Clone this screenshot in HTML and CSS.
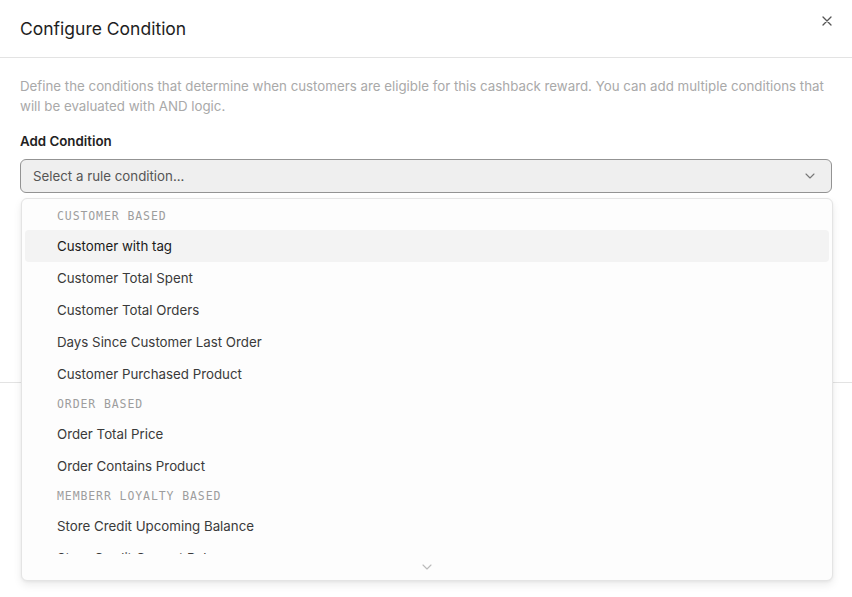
FILE: index.html
```html
<!DOCTYPE html>
<html lang="en">
<head>
<meta charset="utf-8">
<title>Configure Condition</title>
<link rel="stylesheet" href="styles.css">
</head>
<body>
<div class="dialog">
  <header class="dialog-header">
    <h2 class="dialog-title">Configure Condition</h2>
    <button class="close-btn" aria-label="Close">
      <svg width="12" height="12" viewBox="0 0 12 12"><path d="M2 2 L10 10 M10 2 L2 10" stroke="#555" stroke-width="1.3" fill="none" stroke-linecap="round"/></svg>
    </button>
  </header>
  <section class="dialog-body">
    <p class="description">Define the conditions that determine when customers are eligible for this cashback reward. You can add multiple conditions that will be evaluated with AND logic.</p>
    <label class="field-label">Add Condition</label>
    <div class="select-trigger">
      <span class="placeholder">Select a rule condition...</span>
      <svg class="chevron" width="10" height="6" viewBox="0 0 10 6"><path d="M1 1 L5 5 L9 1" stroke="#777" stroke-width="1.1" fill="none" stroke-linecap="round" stroke-linejoin="round"/></svg>
    </div>
  </section>
  <footer class="dialog-footer"></footer>

  <div class="select-content" role="listbox">
    <div class="viewport">
      <div class="group-label">CUSTOMER BASED</div>
      <div class="item item-active">Customer with tag</div>
      <div class="item">Customer Total Spent</div>
      <div class="item">Customer Total Orders</div>
      <div class="item">Days Since Customer Last Order</div>
      <div class="item">Customer Purchased Product</div>
      <div class="group-label">ORDER BASED</div>
      <div class="item">Order Total Price</div>
      <div class="item">Order Contains Product</div>
      <div class="group-label">MEMBERR LOYALTY BASED</div>
      <div class="item">Store Credit Upcoming Balance</div>
      <div class="item">Store Credit Current Balance</div>
    </div>
    <div class="scroll-down">
      <svg width="10" height="6" viewBox="0 0 10 6"><path d="M1 1 L5 5 L9 1" stroke="#bbb" stroke-width="1.1" fill="none" stroke-linecap="round" stroke-linejoin="round"/></svg>
    </div>
  </div>
</div>
</body>
</html>
```
FILE: styles.css
```css
* { box-sizing: border-box; }

html, body {
  margin: 0;
  padding: 0;
  background: #ffffff;
}

body {
  font-family: Inter, "Liberation Sans", sans-serif;
  color: #222;
}

.dialog {
  position: relative;
  width: 852px;
  height: 597px;
  overflow: hidden;
}

.dialog-header {
  height: 58px;
  padding: 0 20px;
  display: flex;
  align-items: center;
  justify-content: space-between;
  border-bottom: 1px solid #e3e3e3;
}

.dialog-title {
  margin: 0;
  font-size: 17.5px;
  font-weight: 400;
  color: #1e1e1e;
  padding-bottom: 1px;
}

.close-btn {
  border: 0;
  background: transparent;
  padding: 0;
  width: 12px;
  height: 12px;
  align-self: flex-start;
  margin-top: 15px;
  margin-right: -1px;
  cursor: pointer;
}

.close-btn svg { display: block; }

.dialog-body {
  padding: 18px 20px 0;
  height: 325px;
  border-bottom: 1px solid #e3e3e3;
}

.description {
  margin: 0;
  font-size: 13.3px;
  line-height: 20px;
  color: #a9a9a9;
}

.field-label {
  display: block;
  margin-top: 16px;
  font-size: 13.3px;
  font-weight: 600;
  color: #222;
  line-height: 18px;
}

.select-trigger {
  margin-top: 9px;
  height: 34px;
  border: 1px solid #939393;
  border-radius: 6px;
  background: #efefef;
  display: flex;
  align-items: center;
  justify-content: space-between;
  padding: 0 16px 0 12px;
}

.placeholder {
  font-size: 13.3px;
  color: #555;
}

.chevron { display: block; }

.select-content {
  position: absolute;
  top: 198px;
  left: 21px;
  width: 812px;
  background: #fdfdfd;
  border: 1px solid #e4e4e4;
  border-radius: 6px;
  box-shadow: 0 4px 8px rgba(0, 0, 0, 0.08), 0 1px 3px rgba(0, 0, 0, 0.05);
  padding: 3px 3px 0;
}

.viewport {
  height: 352px;
  overflow: hidden;
}

.group-label {
  height: 28px;
  padding-left: 32px;
  padding-bottom: 1px;
  display: flex;
  align-items: center;
  font-family: "DejaVu Sans Mono", "Liberation Mono", monospace;
  font-size: 11.5px;
  letter-spacing: 0.9px;
  color: #9d9d9d;
}

.item {
  height: 32px;
  padding-left: 32px;
  display: flex;
  align-items: center;
  font-size: 13.3px;
  color: #3a3a3a;
  border-radius: 4px;
}

.item-active {
  background: #f3f3f3;
  color: #1a1a1a;
}

.scroll-down {
  height: 26px;
  display: flex;
  align-items: center;
  justify-content: center;
}

.scroll-down svg { display: block; }
```
